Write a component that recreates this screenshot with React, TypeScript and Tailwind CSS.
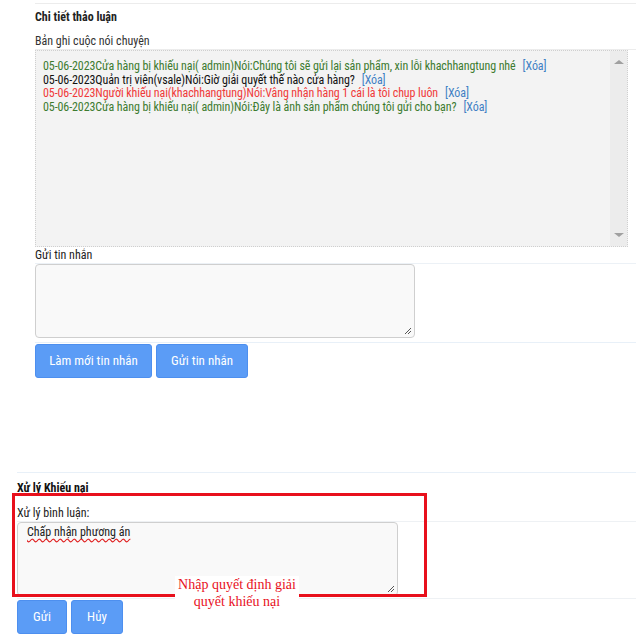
const narrow = { fontFamily: '"Roboto Condensed", Roboto, sans-serif', fontStretch: "condensed" };

type Msg = { date: string; who: string; text: string; color: string };

const messages: Msg[] = [
  { date: "05-06-2023", who: "Cửa hàng bị khiếu nại( admin)", text: "Nói:Chúng tôi sẽ gửi lại sản phẩm, xin lỗi khachhangtung nhé", color: "text-[#3d7b30]" },
  { date: "05-06-2023", who: "Quản trị viên(vsale)", text: "Nói:Giờ giải quyết thế nào cửa hàng?", color: "text-[#111111]" },
  { date: "05-06-2023", who: "Người khiếu nại(khachhangtung)", text: "Nói:Vâng nhận hàng 1 cái là tôi chụp luôn", color: "text-[#f03a3a]" },
  { date: "05-06-2023", who: "Cửa hàng bị khiếu nại( admin)", text: "Nói:Đây là ảnh sản phẩm chúng tôi gửi cho bạn?", color: "text-[#3d7b30]" },
];

function Grip() {
  return (
    <svg width="9" height="9" viewBox="0 0 9 9" className="absolute right-[2px] bottom-[2px]">
      <path d="M8 2 L2 8 M8 5 L5 8" stroke="#555" strokeWidth="1" />
    </svg>
  );
}

function TextBox({ w, value }: { w: string; value?: string }) {
  return (
    <div className={`relative ${w} h-[74px] rounded-[4px] border border-[#cfcfcf] bg-[#f9f9f9]`}>
      {value && (
        <span className="absolute left-[9px] top-[1px] text-[12px] leading-[16px] text-[#222] underline decoration-wavy decoration-[#e02020] underline-offset-2">
          {value}
        </span>
      )}
      <Grip />
    </div>
  );
}

function BlueButton({ w, children }: { w: string; children: string }) {
  return (
    <button className={`h-[34px] ${w} rounded-[3px] border border-[#4d8fef] bg-[#5b9cf6] text-[13px] text-white`}>
      {children}
    </button>
  );
}

export default function App() {
  return (
    <div className="relative w-[636px] h-[642px] overflow-hidden bg-white text-[12px] text-[#222]" style={narrow}>
      {/* Chi tiết thảo luận */}
      <div className="pl-[35px] pt-[3px]">
        <div className="border-t border-[#ececec] pt-[5px]">
          <div className="font-bold leading-[16px] text-[#222]">Chi tiết thảo luận</div>
          <div className="mt-[8px] leading-[16px] text-[#333]">Bản ghi cuộc nói chuyện</div>
        </div>

        <div className="border-t border-[#ececec]">
          <div className="flex w-[593px] h-[197px] border border-dotted border-[#cfcfcf] bg-[#f3f3f3]">
            <div className="flex-1 pl-[7px] pt-[9px] leading-[13.7px] tracking-[-0.1px]">
              {messages.map((m, i) => (
                <div key={i} className={`whitespace-nowrap ${m.color}`}>
                  {m.date}
                  {m.who}
                  {m.text}
                  <span className="ml-[7px] text-[#3f7fc4]">[Xóa]</span>
                </div>
              ))}
            </div>
            <div className="flex w-[17px] flex-col items-center justify-between bg-[#ececec] py-[9px]">
              <div className="h-0 w-0 border-x-[5px] border-b-[4px] border-x-transparent border-b-[#a0a0a0]" />
              <div className="h-0 w-0 border-x-[5px] border-t-[4px] border-x-transparent border-t-[#a0a0a0]" />
            </div>
          </div>
        </div>

        <div className="leading-[16px] text-[#222]">Gửi tin nhắn</div>
        <div className="border-t border-[#ecf1f6]">
          <TextBox w="w-[380px]" />
          <div className="mt-[4px] border-t border-[#e8f0f8] pt-[1px]">
            <div className="flex gap-[4px]">
              <BlueButton w="w-[117px]">Làm mới tin nhắn</BlueButton>
              <BlueButton w="w-[92px]">Gửi tin nhắn</BlueButton>
            </div>
          </div>
        </div>
      </div>

      {/* Xử lý Khiếu nại */}
      <div className="mt-[94px] pl-[17px]">
        <div className="border-t border-[#e8f0f8] pt-[7px]">
          <div className="font-bold leading-[16px] text-[#111]">Xử lý Khiếu nại</div>
          <div className="mt-[9px] leading-[16px] text-[#222]">Xử lý bình luận:</div>
        </div>
        <div className="border-t border-[#eef1f4]">
          <TextBox w="w-[381px]" value="Chấp nhận phương án" />
          <div className="mt-[2px] border-t border-[#eef1f4] pt-[1px]">
            <div className="flex gap-[4px]">
              <BlueButton w="w-[50px]">Gửi</BlueButton>
              <BlueButton w="w-[52px]">Hủy</BlueButton>
            </div>
          </div>
        </div>
      </div>

      {/* annotation */}
      <div className="pointer-events-none absolute left-[12px] top-[493px] h-[104px] w-[415px] border-[3px] border-[#e8101c]" />
      <div
        className="absolute left-[175px] top-[576px] w-[124px] whitespace-nowrap bg-white text-center text-[14px] leading-[17px] text-[#e8101c]"
        style={{ fontFamily: '"Liberation Serif", serif' }}
      >
        Nhập quyết định giải
        <br />
        quyết khiếu nại
      </div>
    </div>
  );
}
